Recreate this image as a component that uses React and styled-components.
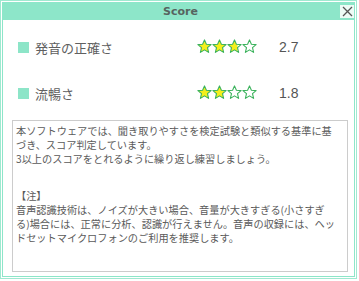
import React from 'react';
import styled, { createGlobalStyle } from 'styled-components';

const GlobalStyle = createGlobalStyle`
    html, body {
        margin: 0;
        padding: 0;
        background: #ffffff;
    }
    body {
        font-family: "Noto Sans CJK JP", "Liberation Sans", sans-serif;
    }
`;

// data

const scores = [
    { label: '発音の正確さ', value: 2.7 },
    { label: '流暢さ', value: 1.8 },
];

// components

const StarPath = 'M7.5 0.9 L9.4 5.3 L14.1 5.6 L10.5 8.7 L11.6 13.4 L7.5 10.9 L3.4 13.4 L4.5 8.7 L0.9 5.6 L5.6 5.3 Z';

const Star = ({ fill, id }) => (
    <StarIcon width="15" height="15" viewBox="0 0 15 15">
        <defs>
            <clipPath id={id}>
                <rect x="0" y="0" width={15 * fill} height="15" />
            </clipPath>
        </defs>
        <path d={StarPath} fill="#ffffff" />
        <path d={StarPath} fill="#f4ef1c" clipPath={`url(#${id})`} />
        <path d={StarPath} fill="none" stroke="#3bb25c" strokeWidth="1.1" strokeLinejoin="round" />
    </StarIcon>
);

const Stars = ({ value, name }) => (
    <StarRow>
        {[0, 1, 2, 3].map((i) => (
            <Star key={i} id={`${name}-${i}`} fill={Math.max(0, Math.min(1, value - i))} />
        ))}
    </StarRow>
);

const App = () => (
    <>
        <GlobalStyle />
        <Frame>
            <Window>
                <TitleBar>
                    <Title>Score</Title>
                    <CloseButton>
                        <svg width="11" height="11" viewBox="0 0 11 11">
                            <path d="M1 1 L10 10 M10 1 L1 10" stroke="#555" strokeWidth="1.3" />
                        </svg>
                    </CloseButton>
                </TitleBar>
                <Body>
                    {scores.map((s, i) => (
                        <ScoreRow key={s.label}>
                            <Label>
                                <Marker />
                                {s.label}
                            </Label>
                            <Stars value={s.value} name={`row${i}`} />
                            <Value>{s.value.toFixed(1)}</Value>
                        </ScoreRow>
                    ))}
                    <Note>
                        <Para gap>
                            本ソフトウェアでは、聞き取りやすさを検定試験と類似する基準に基
                            <br />
                            づき、スコア判定しています。
                            <br />
                            3以上のスコアをとれるように繰り返し練習しましょう。
                        </Para>
                        <Para>
                            【注】
                            <br />
                            音声認識技術は、ノイズが大きい場合、音量が大きすぎる(小さすぎ
                            <br />
                            る)場合には、正常に分析、認識が行えません。音声の収録には、ヘッ
                            <br />
                            ドセットマイクロフォンのご利用を推奨します。
                        </Para>
                    </Note>
                </Body>
            </Window>
        </Frame>
    </>
);

const Frame = styled.div`
    width: 357px;
    height: 279px;
    box-sizing: border-box;
    border: 1px solid #9fe9d0;
    padding: 1px;
    background: #ffffff;
`;

const Window = styled.div`
    height: 100%;
    box-sizing: border-box;
    border: 1px solid #8de6c9;
    display: flex;
    flex-direction: column;
`;

const TitleBar = styled.div`
    position: relative;
    height: 17px;
    background: #8de6c9;
    display: flex;
    align-items: center;
    justify-content: center;
`;

const Title = styled.div`
    font-family: "DejaVu Sans", "Liberation Sans", sans-serif;
    font-weight: bold;
    font-size: 11px;
    color: #56645f;
    padding-left: 4px;
`;

const CloseButton = styled.div`
    position: absolute;
    right: 0px;
    top: 2px;
    width: 14px;
    height: 13px;
    background: #eefbf6;
    display: flex;
    align-items: center;
    justify-content: center;
`;

const Body = styled.div`
    flex: 1;
    padding: 4px 0 0 9px;
    background: #ffffff;
`;

const ScoreRow = styled.div`
    display: grid;
    grid-template-columns: 179px 82px auto;
    align-items: center;
    height: 46px;
    padding-left: 6px;
`;

const Label = styled.div`
    display: flex;
    align-items: center;
    gap: 6px;
    font-size: 13px;
    color: #606060;
`;

const Marker = styled.span`
    width: 11px;
    height: 11px;
    background: #8de5c8;
`;

const StarRow = styled.div`
    display: flex;
    margin-top: -1px;
`;

const StarIcon = styled.svg`
    display: block;
`;

const Value = styled.div`
    font-family: "Liberation Sans", sans-serif;
    font-size: 14px;
    color: #555555;
`;

const Note = styled.div`
    margin-top: 4px;
    width: 336px;
    height: 152px;
    box-sizing: border-box;
    border: 1px solid #cccccc;
    padding: 3px 0 0 3px;
    font-size: 10.2px;
    line-height: 14px;
    color: #5a5a5a;
    white-space: nowrap;
`;

const Para = styled.p`
    margin: 0 0 ${({ gap }) => (gap ? '23px' : '0')} 0;
`;

export default App;
